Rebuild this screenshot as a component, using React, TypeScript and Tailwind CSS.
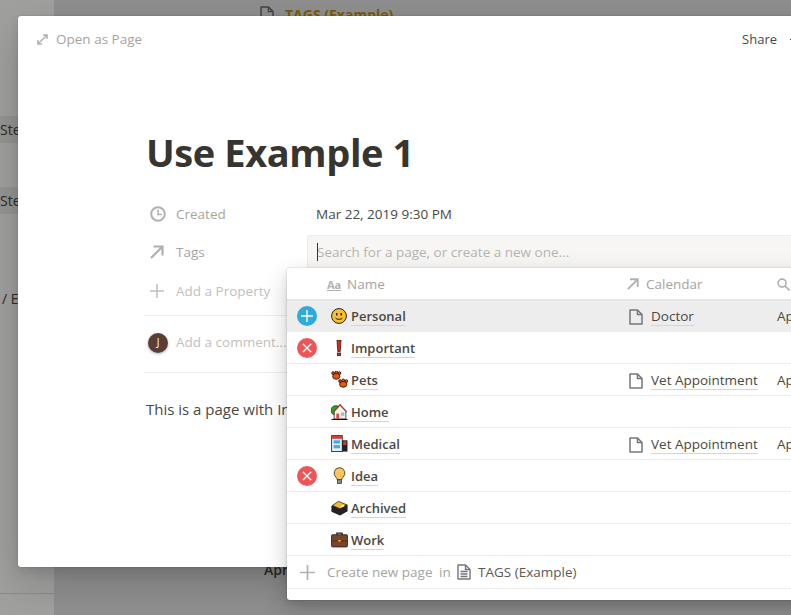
import React from 'react';

const font = { fontFamily: '"Open Sans", "Noto Sans", sans-serif' };

function DocIcon({ className = '' }: { className?: string }) {
  return (
    <svg viewBox="0 0 14 16" className={className} fill="none" stroke="currentColor" strokeWidth="1.5">
      <path d="M1 1h7.5L13 5.5V15H1z" strokeLinejoin="round" />
      <path d="M8.5 1v4.5H13" />
    </svg>
  );
}

function DocLinesIcon({ className = '' }: { className?: string }) {
  return (
    <svg viewBox="0 0 14 16" className={className} fill="none" stroke="currentColor" strokeWidth="1.4">
      <path d="M1 1h7.5L13 5.5V15H1z" strokeLinejoin="round" />
      <path d="M8.5 1v4.5H13M3.5 7.5h7M3.5 10h7M3.5 12.5h7" />
    </svg>
  );
}

function ArrowIcon({ className = '' }: { className?: string }) {
  return (
    <svg viewBox="0 0 14 14" className={className} fill="none" stroke="currentColor" strokeWidth="2.2">
      <path d="M1 13 12.5 1.5M3.5 1.5h9v9" />
    </svg>
  );
}

function PlusIcon({ className = '' }: { className?: string }) {
  return (
    <svg viewBox="0 0 14 14" className={className} fill="none" stroke="currentColor" strokeWidth="1.6">
      <path d="M7 0v14M0 7h14" />
    </svg>
  );
}

function Smile() {
  return (
    <svg viewBox="0 0 16 16" className="w-4 h-4">
      <circle cx="8" cy="8" r="7.4" fill="#fbc02d" stroke="#222" strokeWidth="1" />
      <rect x="5" y="5" width="1.5" height="2.5" fill="#222" />
      <rect x="9.5" y="5" width="1.5" height="2.5" fill="#222" />
      <path d="M4.5 10c1 1.8 6 1.8 7 0" fill="none" stroke="#222" strokeWidth="1" />
    </svg>
  );
}

function Bang() {
  return (
    <svg viewBox="0 0 16 16" className="w-4 h-4">
      <path d="M6 0h4L9.200 11.500H6.800z" fill="#e0261c" stroke="#222" strokeWidth=".8" />
      <rect x="6.500" y="13" width="3" height="3" fill="#e0261c" stroke="#222" strokeWidth=".8" />
    </svg>
  );
}

function Paws() {
  return (
    <svg viewBox="0 0 16 16" className="w-[17px] h-[17px]" fill="#e8590c" stroke="#2a1206" strokeWidth=".8">
      <ellipse cx="5" cy="5" rx="3.400" ry="2.800" />
      <circle cx="2" cy="2" r="1.300" />
      <circle cx="5" cy="1.300" r="1.300" />
      <circle cx="8" cy="2" r="1.300" />
      <ellipse cx="11.500" cy="12.500" rx="3.400" ry="2.800" />
      <circle cx="8.500" cy="9.500" r="1.300" />
      <circle cx="11.500" cy="8.800" r="1.300" />
      <circle cx="14.500" cy="9.500" r="1.300" />
    </svg>
  );
}

function House() {
  return (
    <svg viewBox="0 0 16 16" className="w-[17px] h-[17px]">
      <circle cx="4.500" cy="7" r="4.500" fill="#22a822" stroke="#123" strokeWidth=".7" />
      <path d="M3 15V8l5.500-6L14 8v7z" fill="#f7f3ea" stroke="#222" strokeWidth=".7" />
      <path d="M2 8.500 8.500 1.500 15 8.500" fill="none" stroke="#a33" strokeWidth="1" />
      <rect x="5" y="10" width="2.500" height="5" fill="#e0493d" />
      <rect x="9.500" y="9" width="3" height="3" fill="#6cc7ee" />
      <path d="M.5 15.500h15" stroke="#111" strokeWidth="1" />
    </svg>
  );
}

function Hospital() {
  return (
    <svg viewBox="0 0 16 16" className="w-[17px] h-[17px]">
      <rect x=".6" y=".6" width="10" height="15" fill="#e8eef2" stroke="#222" strokeWidth=".8" />
      <rect x="1" y="1" width="9.500" height="2.500" fill="#d9352b" />
      <rect x="2.500" y="5" width="6" height="3" fill="#35b0ea" />
      <rect x="2.500" y="9.500" width="6" height="3" fill="#35b0ea" />
      <rect x="10.500" y="5" width="5" height="10.600" fill="#222" />
      <rect x="11.500" y="6" width="3" height="3.500" fill="#d9352b" />
    </svg>
  );
}

function Bulb() {
  return (
    <svg viewBox="0 0 16 16" className="w-[17px] h-[17px]">
      <path d="M8 .6a5.200 5.200 0 0 0-3.200 9.200c.7.600 1 1.200 1 2.200h4.400c0-1 .3-1.600 1-2.200A5.200 5.200 0 0 0 8 .6z" fill="#fcc65a" stroke="#333" strokeWidth=".8" />
      <rect x="6" y="12" width="4" height="3.400" fill="#8d8d8d" stroke="#333" strokeWidth=".7" />
    </svg>
  );
}

function Box() {
  return (
    <svg viewBox="0 0 16 16" className="w-[17px] h-[17px]">
      <path d="M.4 6.500 7 2l8.600 3.500v6L8.500 15.500.4 12z" fill="#222" />
      <path d="M1.500 6 7 2.200 14.500 5.500 8.500 9.200z" fill="#f5b82e" stroke="#222" strokeWidth=".5" />
      <rect x="9.500" y="6" width="3" height="1.500" fill="#fff" transform="rotate(-25 11 7)" />
    </svg>
  );
}

function Briefcase() {
  return (
    <svg viewBox="0 0 16 16" className="w-[17px] h-[17px]">
      <path d="M5.500 4V2h5v2" fill="none" stroke="#222" strokeWidth="1.200" />
      <rect x=".5" y="3.500" width="15" height="11.500" rx="1" fill="#7a4526" stroke="#222" strokeWidth=".8" />
      <rect x=".6" y="9" width="14.800" height=".8" fill="#4f2b15" />
      <rect x="6.800" y="8.500" width="2.400" height="1.500" fill="#f0b429" />
    </svg>
  );
}

const rows = [
  { name: 'Personal', emoji: <Smile />, action: 'add', calendar: 'Doctor', date: 'Ap', active: true },
  { name: 'Important', emoji: <Bang />, action: 'remove' },
  { name: 'Pets', emoji: <Paws />, calendar: 'Vet Appointment', date: 'Ap' },
  { name: 'Home', emoji: <House /> },
  { name: 'Medical', emoji: <Hospital />, calendar: 'Vet Appointment', date: 'Ap' },
  { name: 'Idea', emoji: <Bulb />, action: 'remove' },
  { name: 'Archived', emoji: <Box /> },
  { name: 'Work', emoji: <Briefcase /> },
];

function RowAction({ action }: { action?: string }) {
  if (action === 'add') {
    return (
      <span className="w-5 h-5 rounded-full bg-[#2eaadc] flex items-center justify-center text-white">
        <PlusIcon className="w-3 h-3" />
      </span>
    );
  }
  if (action === 'remove') {
    return (
      <span className="w-5 h-5 rounded-full bg-[#eb5757] flex items-center justify-center text-white">
        <PlusIcon className="w-3 h-3 rotate-45" />
      </span>
    );
  }
  return <span className="w-5 h-5" />;
}

export default function App() {
  return (
    <div className="relative w-[791px] h-[615px] overflow-hidden flex bg-[#929292] text-[#37352f]" style={font}>
      {/* page behind the modal */}
      <div className="w-[55px] h-full bg-[#a0a09e] border-r border-[#8f8f8d] flex flex-col text-[14px] text-[#2b2a27]">
        <div className="mt-[116px] h-[27px] bg-[#959593] flex items-center">Ste</div>
        <div className="mt-[44px] h-[27px] bg-[#959593] flex items-center">Ste</div>
        <div className="mt-[71px] h-[27px] flex items-center pl-[2px]">/ E</div>
        <div className="mt-[281px] border-t border-[#8c8c8a]" />
      </div>
      <div className="flex-1 h-full bg-[#8f8f8f]">
        <div className="pl-[205px] flex items-center gap-[11px] h-[28px] text-[#7a5c08]">
          <DocIcon className="w-[14px] h-[16px] text-[#444]" />
          <span className="text-[14px] font-bold underline">TAGS (Example)</span>
        </div>
        <div className="mt-[532px] pl-[209px] text-[14px] font-semibold text-[#2b2a27] leading-[20px]">Apr</div>
        <div className="mt-[7px] pl-[241px] flex text-[12px] text-[#6e6e6e] leading-[16px]">
          <span className="w-[99px]">Sun</span>
          <span className="w-[105px]">Mon</span>
          <span className="w-[98px]">Tue</span>
          <span className="w-[102px]">Wed</span>
          <span>Thu</span>
        </div>
      </div>

      {/* modal */}
      <div className="absolute left-[18px] top-[16px] w-[900px] h-[551px] bg-white rounded-[3px] shadow-[0_0_0_1px_rgba(15,15,15,0.05),0_5px_10px_rgba(15,15,15,0.1),0_15px_40px_rgba(15,15,15,0.2)]">
        <div className="h-[46px] flex items-center pl-[19px] text-[14px]">
          <svg viewBox="0 0 12 12" className="w-[11px] h-[11px] text-[#b3b2af] mr-[8px]" fill="none" stroke="currentColor" strokeWidth="1.600">
            <path d="M1 11 11 1M6.500 1H11v4.500M1 6.500V11h4.500" />
          </svg>
          <span className="text-[#a5a4a1] text-[13.500px]">Open as Page</span>
          <span className="ml-[600px] pt-[1px] text-[#4a4843] text-[13px]">Share</span>
          <span className="ml-[13px] w-[3px] shrink-0 border-t border-[#4a4843]" />
        </div>
        <div className="pl-[126px]">
          <h1 className="mt-[64px] pl-[2px] text-[38px] leading-[52px] font-bold tracking-[-0.4px] text-[#37352f]">Use Example 1</h1>
          <div className="mt-[17px] text-[14px]">
            <div className="h-[38px] flex items-center pl-[6px]">
              <svg viewBox="0 0 16 16" className="w-4 h-4 text-[#b3b2af] mr-[10px]" fill="none" stroke="currentColor" strokeWidth="2">
                <circle cx="8" cy="8" r="6.800" />
                <path d="M8 3.500V8.500H12" strokeWidth="1.600" />
              </svg>
              <span className="w-[140px] text-[#a5a4a1] text-[13.500px]">Created</span>
              <span className="text-[13.500px] text-[#4a4843]">Mar 22, 2019 9:30 PM</span>
            </div>
            <div className="h-[38px] flex items-center pl-[6px]">
              <ArrowIcon className="w-[14px] h-[14px] text-[#b3b2af] mr-[12px]" />
              <span className="text-[#a5a4a1] text-[13.500px]">Tags</span>
            </div>
            <div className="h-[38px] mt-[1px] flex items-center pl-[6px] text-[#c2c1be]">
              <PlusIcon className="w-[14px] h-[14px] mr-[12px]" />
              <span className="text-[13.500px]">Add a Property</span>
            </div>
          </div>
          <div className="mt-[5px] border-t border-[#eeeeec] h-[58px] border-b flex items-center pl-[4px] pb-[3px]">
            <span className="w-5 h-5 rounded-full bg-[#5a3e36] text-white text-[10px] flex items-center justify-center mr-[8px] shadow-[0_1px_3px_rgba(0,0,0,0.3)]">J</span>
            <span className="text-[#c2c1be] text-[13.500px]">Add a comment...</span>
          </div>
          <p className="mt-[24px] pl-[2px] text-[15px] leading-[24px] text-[#4a4843]">This is a page with Inline</p>
        </div>
      </div>

      {/* relation search box */}
      <div className="absolute left-[307px] top-[235px] w-[600px] h-[34px] bg-[#f7f6f4] rounded-[3px] border border-[#ecebe9] flex items-center pl-[9px] text-[13.500px] text-[#b5b4b1]">
        <span className="absolute left-[9px] top-[7px] h-[18px] border-l border-[#37352f]" />
        Search for a page, or create a new one...
      </div>

      {/* relation menu */}
      <div className="absolute left-[287px] top-[268px] w-[600px] h-[332px] bg-white rounded-[3px] shadow-[0_0_0_1px_rgba(15,15,15,0.05),0_3px_6px_rgba(15,15,15,0.1),0_9px_24px_rgba(15,15,15,0.2)]">
        <div className="h-[32px] pt-[1px] flex items-center border-b border-[#e6e6e4] text-[13.500px] text-[#a5a4a1]">
          <span className="w-[60px] pl-[40px] text-[11px] font-bold underline text-[#b3b2af] leading-none">Aa</span>
          <span className="w-[280px]">Name</span>
          <ArrowIcon className="w-[12px] h-[12px] text-[#b3b2af] mr-[7px]" />
          <span className="w-[131px]">Calendar</span>
          <svg viewBox="0 0 14 14" className="w-[13px] h-[13px] text-[#b3b2af]" fill="none" stroke="currentColor" strokeWidth="1.800">
            <circle cx="5.500" cy="5.500" r="4.300" />
            <path d="m8.500 8.500 5 5" />
          </svg>
        </div>
        {rows.map((row) => (
          <div
            key={row.name}
            className={`h-8 flex items-center border-b border-[#edecea] text-[14px] ${row.active ? 'bg-[#ededed] shadow-[inset_0_1px_0_#e6e6e4]' : ''}`}
          >
            <div className="w-[44px] pl-[10px] flex items-center">
              <RowAction action={row.action} />
            </div>
            <div className="w-[20px] flex items-center">{row.emoji}</div>
            <div className="w-[276px]">
              <span className="font-semibold text-[13px] text-[#4a4843] leading-[18px] border-b border-[#d5d5d3] inline-block">{row.name}</span>
            </div>
            {row.calendar ? (
              <div className="w-[150px] pt-[2px] flex items-center">
                <DocIcon className="w-[14px] h-[16px] text-[#77767a] mr-[8px] ml-[2px]" />
                <span className="text-[13.500px] text-[#4a4843] leading-[18px] border-b border-[#d5d5d3]">{row.calendar}</span>
              </div>
            ) : (
              <div className="w-[150px]" />
            )}
            <span className="pt-[2px] text-[13.500px] text-[#4a4843]">{row.date}</span>
          </div>
        ))}
        <div className="h-[33px] flex items-center border-b border-[#edecea] text-[13.500px] text-[#a5a4a1]">
          <PlusIcon className="w-[15px] h-[15px] ml-[13px] mr-[12px] text-[#b3b2af]" />
          <span className="w-[112px]">Create new page</span>
          <span className="w-[18px]">in</span>
          <DocLinesIcon className="w-[14px] h-[16px] text-[#77767a] mr-[7px]" />
          <span className="text-[#5c5a55]">TAGS (Example)</span>
        </div>
      </div>
    </div>
  );
}
